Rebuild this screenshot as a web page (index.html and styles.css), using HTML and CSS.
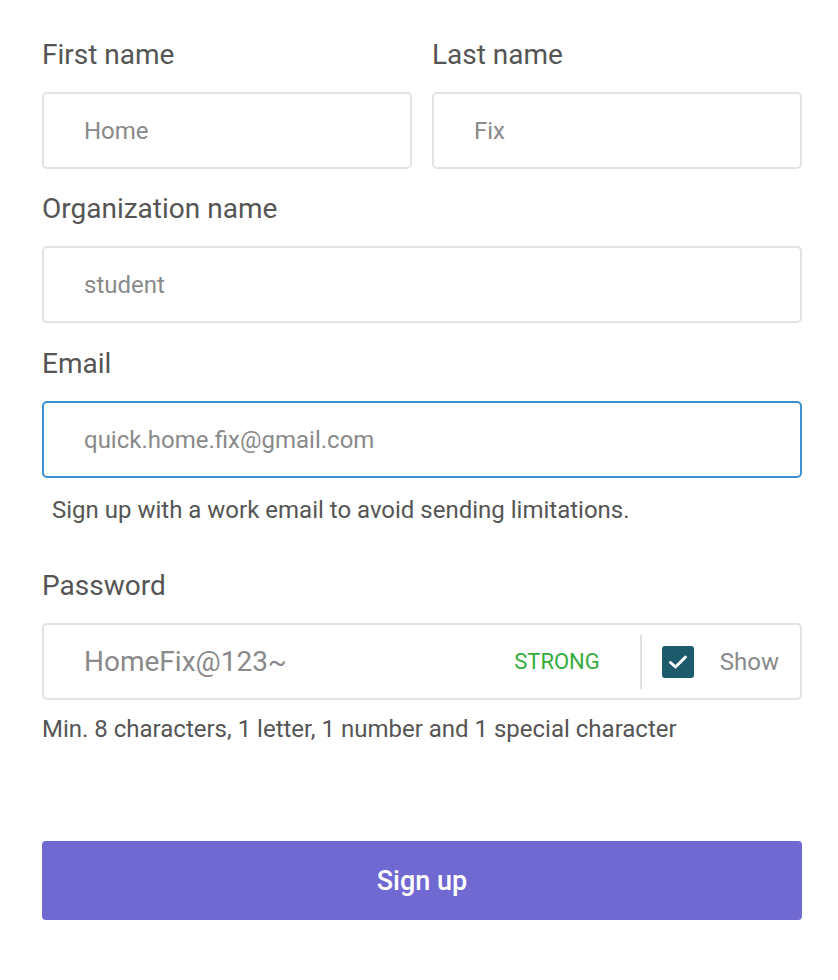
FILE: index.html
```html
<!DOCTYPE html>
<html lang="en">
<head>
<meta charset="utf-8">
<title>Sign up</title>
<link rel="stylesheet" href="styles.css">
</head>
<body>
<form class="form">
  <div class="row">
    <div class="field">
      <div class="label">First name</div>
      <div class="input">Home</div>
    </div>
    <div class="field">
      <div class="label">Last name</div>
      <div class="input">Fix</div>
    </div>
  </div>
  <div class="field field-org">
    <div class="label">Organization name</div>
    <div class="input">student</div>
  </div>
  <div class="field field-email">
    <div class="label">Email</div>
    <div class="input input-focus">quick.home.fix@gmail.com</div>
    <div class="help">Sign up with a work email to avoid sending limitations.</div>
  </div>
  <div class="field field-password">
    <div class="label">Password</div>
    <div class="input input-password">
      <span class="pw-value">HomeFix@123~</span>
      <span class="strength">STRONG</span>
      <span class="divider"></span>
      <span class="checkbox">
        <svg width="20" height="16" viewBox="0 0 20 16"><path d="M2.5 8.5 L7.5 13 L17.5 3" fill="none" stroke="#fff" stroke-width="3" stroke-linecap="round" stroke-linejoin="round"/></svg>
      </span>
      <span class="show">Show</span>
    </div>
    <div class="hint">Min. 8 characters, 1 letter, 1 number and 1 special character</div>
  </div>
  <div class="button">Sign up</div>
</form>
</body>
</html>
```
FILE: styles.css
```css
html, body {
  margin: 0;
  padding: 0;
  background: #ffffff;
}
body {
  font-family: Roboto, "Liberation Sans", sans-serif;
}
.form {
  width: 760px;
  padding: 38px 0 0 42px;
}
.row {
  display: grid;
  grid-template-columns: 1fr 1fr;
  gap: 20px;
}
.field {
  margin-bottom: 23px;
}
.field-org {
  margin-bottom: 24px;
}
.label {
  font-size: 28px;
  line-height: 33px;
  color: #555555;
  margin-bottom: 21px;
}
.input {
  box-sizing: border-box;
  height: 77px;
  border: 2px solid #e2e2e2;
  border-radius: 5px;
  padding-left: 40px;
  display: flex;
  align-items: center;
  font-size: 24px;
  color: #8a8a8a;
}
.input-focus {
  border-color: #3b90cf;
}
.help {
  font-size: 24px;
  line-height: 28px;
  color: #555555;
  margin-top: 18px;
  padding-left: 10px;
}
.field-email {
  margin-bottom: 45px;
}
.input-password {
  padding-right: 21px;
}
.pw-value {
  font-size: 28px;
  flex: 1;
}
.strength {
  font-size: 22px;
  color: #35ab3b;
  margin-right: 40px;
}
.divider {
  width: 2px;
  height: 54px;
  background: #e0e0e0;
  margin-right: 20px;
}
.checkbox {
  width: 32px;
  height: 32px;
  border-radius: 3px;
  background: #1d5a6b;
  display: flex;
  align-items: center;
  justify-content: center;
  margin-right: 26px;
}
.show {
  font-size: 24px;
  color: #8a8a8a;
}
.hint {
  font-size: 24px;
  line-height: 28px;
  color: #555555;
  margin-top: 15px;
}
.field-password {
  margin-bottom: 98px;
}
.button {
  height: 79px;
  border-radius: 4px;
  background: #7069d1;
  color: #ffffff;
  font-size: 27px;
  font-weight: 500;
  display: flex;
  align-items: center;
  justify-content: center;
}
```
